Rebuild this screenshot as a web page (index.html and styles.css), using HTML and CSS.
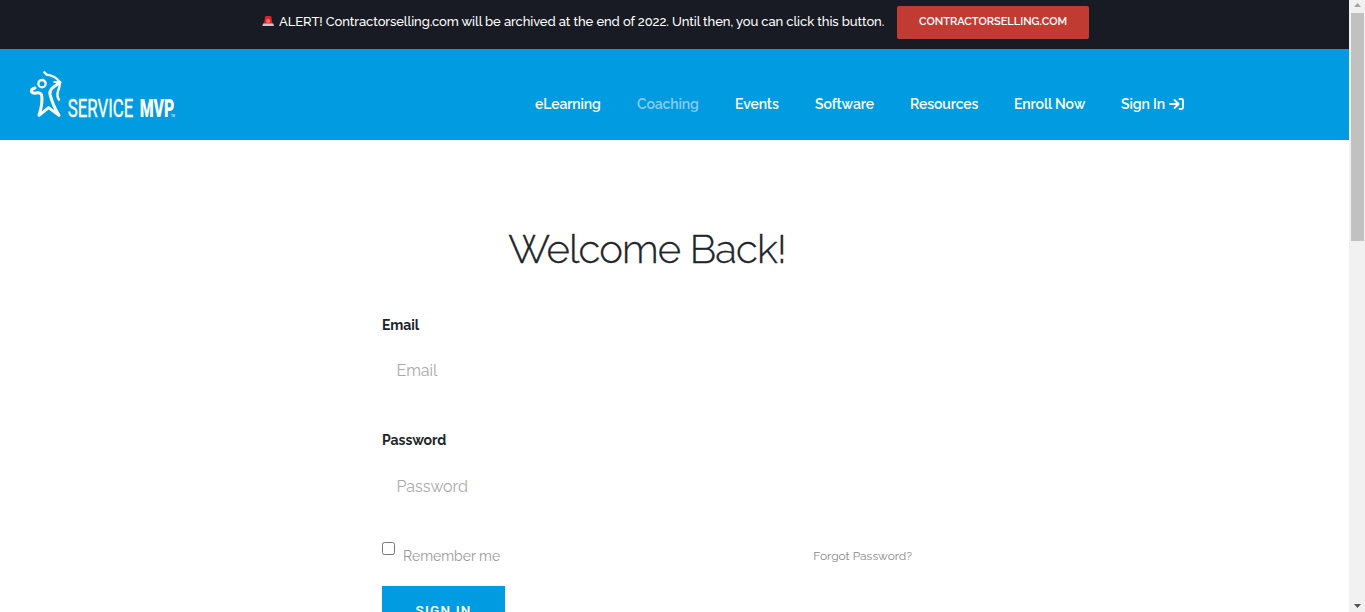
FILE: index.html
```html
<!DOCTYPE html>
<html lang="en">
<head>
    <meta charset="UTF-8">
    <meta name="viewport" content="width=device-width, initial-scale=1.0">
    <title>Sign In</title>
    <link rel="stylesheet" href="styles.css">
</head>
<body>
    <div class="page">
        <div class="alert-bar">
            <svg class="siren" viewBox="0 0 12 12">
                <path d="M2 9 L3 2.2 Q3.2 1 4.4 1 H8 Q9.2 1 9.4 2.2 L10.4 9 Z" fill="#d9232e"/>
                <circle cx="6.2" cy="6" r="2.1" fill="#ff6d5a"/>
                <path d="M1 8.6 H11.4 L12 11 H.4 Z" fill="#c9c4c6"/>
            </svg>
            <span class="alert-text">ALERT! Contractorselling.com will be archived at the end of 2022. Until then, you can click this button.</span>
            <a class="alert-button" href="#"><span>CONTRACTORSELLING.COM</span></a>
        </div>

        <header class="header">
            <a class="logo" href="#">
                <svg width="170" height="70" viewBox="0 0 510 210">
                    <g fill="none" stroke="#fff" stroke-width="9" stroke-linecap="round" stroke-linejoin="round">
                        <circle cx="66" cy="71" r="11" stroke-width="7"/>
                        <path d="M73 37 L80 44 Q106 47 120 67 Q119 84 113 97 Q110 110 117 119" stroke-width="7"/>
                        <path d="M120 67 L97 84 Q88 92 90 103 Q98 135 117 166 L86 143 L57 166 Q69 130 65 105 Q60 96 49 99 Q39 102 34 94 Q34 86 45 84"/>
                        <path d="M120 67 L103 66" stroke-width="6"/>
                    </g>
                    <g fill="#fff" font-family="Roboto, sans-serif" font-size="77">
                        <text x="143" y="170" textLength="197" lengthAdjust="spacingAndGlyphs" stroke="#fff" stroke-width="1">SERVICE</text>
                        <text x="359" y="170" textLength="104" lengthAdjust="spacingAndGlyphs" font-weight="900">MVP</text>
                        <text x="453" y="170" textLength="12" lengthAdjust="spacingAndGlyphs" font-size="9">TM</text>
                    </g>
                </svg>
            </a>
            <nav class="nav">
                <a href="#">eLearning</a>
                <a class="active" href="#">Coaching</a>
                <a href="#">Events</a>
                <a href="#">Software</a>
                <a href="#">Resources</a>
                <a href="#">Enroll Now</a>
                <a class="sign-in" href="#">Sign In
                    <svg width="15" height="12" viewBox="0 0 15 12" fill="none" stroke="#fff" stroke-width="1.8" stroke-linecap="round" stroke-linejoin="round">
                        <path d="M1 6 H9.5 M5.5 2 L9.7 6 L5.5 10 M10.5 1 H12.5 Q14 1 14 2.5 V9.5 Q14 11 12.5 11 H10.5"/>
                    </svg>
                </a>
            </nav>
        </header>

        <main class="content">
            <h1>Welcome Back!</h1>
            <form class="login-form">
                <label for="email">Email</label>
                <input class="field email" id="email" type="email" placeholder="Email">
                <label class="password-label" for="password">Password</label>
                <input class="field password" id="password" type="password" placeholder="Password">
                <div class="form-row">
                    <label class="remember"><input type="checkbox"><span>Remember me</span></label>
                    <a class="forgot" href="#">Forgot Password?</a>
                </div>
                <button class="submit" type="button">SIGN IN</button>
            </form>
        </main>
    </div>

    <div class="scrollbar">
        <svg width="7" height="4" viewBox="0 0 7 4"><path d="M0 4 L3.5 0 L7 4 Z" fill="#a3a3a3"/></svg>
        <div class="thumb"></div>
        <svg class="down" width="7" height="4" viewBox="0 0 7 4"><path d="M0 0 L3.5 4 L7 0 Z" fill="#505050"/></svg>
    </div>
</body>
</html>
```
FILE: styles.css
```css
* {
    box-sizing: border-box;
}
body {
    display: flex;
    height: 100vh;
    margin: 0;
    overflow: hidden;
    background-color: #fff;
    font-family: Raleway, Lato, sans-serif;
}
a {
    color: inherit;
    text-decoration: none;
}
.page {
    flex: 1;
    min-width: 0;
    height: 100vh;
    overflow: hidden;
}
.alert-bar {
    display: flex;
    align-items: flex-start;
    height: 49px;
    padding: 6px 0 0 262px;
    background-color: #181b24;
    color: #fff;
    white-space: nowrap;
}
.siren {
    width: 12px;
    height: 12px;
    margin-top: 9px;
}
.alert-text {
    width: 605px;
    margin-left: 5px;
    font-size: 13px;
    font-weight: 500;
    line-height: 31px;
    letter-spacing: -0.08px;
}
.alert-button {
    display: flex;
    justify-content: center;
    width: 192px;
    height: 33px;
    margin-left: 13px;
    border-radius: 2px;
    background-color: #c23b33;
    font-size: 11px;
    font-weight: 600;
    line-height: 31px;
}
.header {
    display: flex;
    height: 91px;
    padding: 11px 0 0 20px;
    background-color: #009be0;
    color: #fff;
}
.logo {
    width: 170px;
    height: 70px;
}
.nav {
    display: grid;
    grid-template-columns: 66px 62px 44px 59px 68px 71px 64px;
    column-gap: 36px;
    align-items: start;
    margin-left: 345px;
    padding-top: 33px;
    font-size: 14px;
    font-weight: 600;
    line-height: 22px;
    letter-spacing: -0.1px;
    white-space: nowrap;
}
.active {
    color: #8ccdf0;
}
.sign-in {
    display: flex;
    align-items: center;
    gap: 4px;
}
.content {
    padding: 85px 0 0 382px;
}
h1 {
    width: 530px;
    margin: 0;
    color: #212529;
    font-size: 40px;
    font-weight: 300;
    line-height: 48px;
    letter-spacing: -0.85px;
    text-align: center;
    -webkit-text-stroke: 0.3px #212529;
}
.login-form {
    display: flex;
    flex-direction: column;
    width: 530px;
    margin-top: 41px;
}
.login-form label {
    color: #212529;
    font-size: 14px;
    font-weight: 700;
    line-height: 22px;
    letter-spacing: -0.05px;
}
.field {
    height: 50px;
    margin-top: 10px;
    padding: 0 14.5px;
    border: 0;
    outline: 0;
    background: none;
    font-family: inherit;
    font-size: 16px;
}
.email {
    margin: 9px 0 1px;
}
.field::placeholder {
    color: #aaa;
}
.login-form .password-label {
    margin-top: 33px;
}
.form-row {
    display: flex;
    justify-content: space-between;
    margin-top: 34px;
}
.login-form .remember {
    display: flex;
    color: #999;
    font-weight: 400;
    letter-spacing: 0;
}
.remember input {
    width: 13px;
    height: 13px;
    margin: -3px 8px 0 0;
}
.forgot {
    color: #888;
    font-size: 12px;
    line-height: 22px;
}
.submit {
    width: 123px;
    height: 48px;
    margin-top: 19px;
    border: 0;
    background-color: #009be0;
    color: #fff;
    font-family: Roboto, sans-serif;
    font-size: 13.5px;
    font-weight: 600;
    letter-spacing: 1.2px;
}
.scrollbar {
    display: flex;
    flex-direction: column;
    align-items: center;
    width: 16px;
    height: 100vh;
    padding: 3px 0 4px;
    background-color: #f1f1f1;
}
.thumb {
    width: 13px;
    height: 228px;
    margin-top: 6px;
    background-color: #c1c1c1;
}
.down {
    margin-top: auto;
}
```
